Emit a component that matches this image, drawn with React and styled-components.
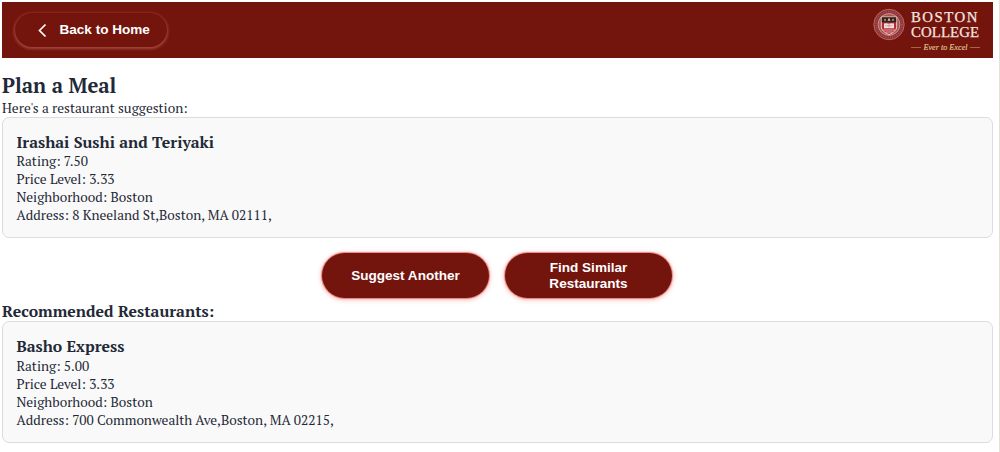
import React from "react";
import styled, { createGlobalStyle } from "styled-components";

const GlobalStyle = createGlobalStyle`
  * { box-sizing: border-box; margin: 0; padding: 0; }
  html, body { background: #fff; overflow: hidden; }
  body {
    font-family: "PT Serif", "Liberation Serif", serif;
    color: #1f2937;
  }
`;

const Page = styled.div`
  height: 452px;
  padding: 2px 6px 0 2px;
  border-right: 1px solid #e3e3d3;
`;

const Header = styled.header`
  display: flex;
  justify-content: space-between;
  height: 56px;
  padding: 11px 13px 0 13px;
  background: #73140d;
`;

const BackButton = styled.button`
  display: flex;
  align-items: center;
  width: 152px;
  height: 34px;
  padding: 0 0 0 21.5px;
  gap: 12px;
  border: 0;
  border-radius: 18px;
  background: #73140d;
  color: #fff;
  font: bold 13.56px/16px "Liberation Sans", Arial, sans-serif;
  box-shadow: 0 1px 3px 1px rgba(215, 120, 110, 0.5);
  white-space: nowrap;
`;

const Brand = styled.div`
  display: flex;
  gap: 6px;
  margin-top: -5px;
`;

const BrandText = styled.div`
  width: 69px;
  padding-top: 2px;
  color: #f3e6e0;
  white-space: nowrap;
`;

const BrandLine = styled.div`
  font-family: "Liberation Serif", serif;
  font-size: 14.8px;
  line-height: 15px;
  letter-spacing: ${(p) => p.$spacing}px;
  -webkit-text-stroke: 0.25px #f3e6e0;
`;

const Motto = styled.div`
  display: flex;
  align-items: center;
  gap: 2px;
  margin-top: 3px;
  font-family: "Liberation Serif", serif;
  font-size: 8.2px;
  font-style: italic;
  line-height: 9px;
  color: #dfc494;
  -webkit-text-stroke: 0.15px #dfc494;
  &::before, &::after {
    content: "";
    flex: 1;
    height: 1px;
    background: #a9653f;
  }
`;

const Title = styled.h1`
  margin-top: 15px;
  font-size: 20.34px;
  line-height: 26px;
`;

const Line = styled.p`
  font-size: 13.56px;
  line-height: 18px;
  white-space: nowrap;
`;

const Card = styled.section`
  height: ${(p) => p.$height}px;
  padding: 15px 13.4px 0;
  border: 1px solid #dcdcdc;
  border-radius: 7px;
  background: #f9f9f9;
`;

const Subtitle = styled.h2`
  margin-bottom: ${(p) => p.$gap || 0}px;
  font-size: 15.86px;
  line-height: 20px;
`;

const Actions = styled.div`
  display: flex;
  justify-content: center;
  gap: 16px;
  padding: 15px 1px 4px 0;
`;

const ActionButton = styled.button`
  width: 167px;
  height: 45px;
  padding: 0 27px;
  border: 0;
  border-radius: 23px;
  background: #73140d;
  color: #fff;
  font: bold 13.56px/16px "Liberation Sans", Arial, sans-serif;
  box-shadow: 0 0 1px 1px rgba(225, 95, 90, 0.7), 0 1px 5px 1px rgba(240, 100, 90, 0.4);
`;

const Seal = () => (
  <svg width="32" height="33" viewBox="0 0 32 33">
    <circle cx="16" cy="16.500" r="15.200" fill="#8e3044" stroke="#b96b4a" strokeWidth="1" />
    <circle cx="16" cy="16.500" r="13" fill="none" stroke="#a8545a" strokeWidth="1.600" strokeDasharray="1 1.300" />
    <circle cx="16" cy="16.500" r="10.900" fill="#a8535a" stroke="#cf9a72" strokeWidth="1" />
    <path d="M8.300 9h15.400v9.500c0 4-3.400 6.200-7.700 8-4.300-1.800-7.700-4-7.700-8z" fill="#b52b38" stroke="#ead6c4" strokeWidth="1" />
    <path d="M8.800 9.300h14.400v5H8.800z" fill="#2c2022" />
    <path d="M10.800 12.500l1.200-2 1.200 2zM14.500 12.800L16 9.800l1.500 3zM18.800 12.500l1.200-2 1.200 2z" fill="#e9d291" />
    <path d="M11 15.500q2.800-.8 5 .3 2.200-1.100 5-.3v4.800H11z" fill="#f0e0dc" />
    <path d="M16 16v3.500M12.500 17.700h7" stroke="#cf8588" strokeWidth=".7" />
    <path d="M10 22h12M12.500 24h7" stroke="#e2adb0" strokeWidth=".9" />
  </svg>
);

const restaurants = [
  {
    name: "Irashai Sushi and Teriyaki",
    lines: ["Rating: 7.50", "Price Level: 3.33", "Neighborhood: Boston", "Address: 8 Kneeland St,Boston, MA 02111,"],
  },
  {
    name: "Basho Express",
    lines: ["Rating: 5.00", "Price Level: 3.33", "Neighborhood: Boston", "Address: 700 Commonwealth Ave,Boston, MA 02215,"],
  },
];

const RestaurantCard = ({ data, gap, height }) => (
  <Card $height={height}>
    <Subtitle $gap={gap}>{data.name}</Subtitle>
    {data.lines.map((text) => (
      <Line key={text}>{text}</Line>
    ))}
  </Card>
);

export default function App() {
  return (
    <>
      <GlobalStyle />
      <Page>
        <Header>
          <BackButton>
            <svg width="11" height="15" viewBox="0 0 11 15" fill="none" stroke="#fff" strokeWidth="1.7">
              <path d="M8.500 1.500L2.500 7.500l6 6" />
            </svg>
            Back to Home
          </BackButton>
          <Brand>
            <Seal />
            <BrandText>
              <BrandLine $spacing={1.5}>BOSTON</BrandLine>
              <BrandLine $spacing={0.1}>COLLEGE</BrandLine>
              <Motto>Ever to Excel</Motto>
            </BrandText>
          </Brand>
        </Header>
        <Title>Plan a Meal</Title>
        <Line>Here's a restaurant suggestion:</Line>
        <RestaurantCard data={restaurants[0]} gap={-1} height={121} />
        <Actions>
          <ActionButton>Suggest Another</ActionButton>
          <ActionButton>Find Similar Restaurants</ActionButton>
        </Actions>
        <Subtitle $gap={-1}>Recommended Restaurants:</Subtitle>
        <RestaurantCard data={restaurants[1]} height={122} />
      </Page>
    </>
  );
}
